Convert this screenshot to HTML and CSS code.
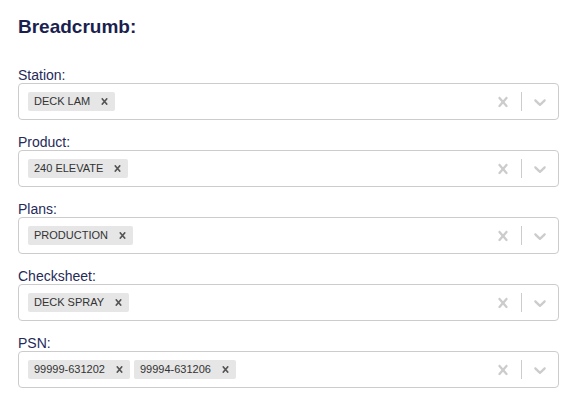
FILE: index.html
```html
<!DOCTYPE html>
<html>
<head lang="en">
    <meta charset="UTF-8">
    <title>Breadcrumb</title>
    <link rel="stylesheet" href="styles.css">
</head>
<body>
<div class="page">
    <h2 class="title">Breadcrumb:</h2>

    <div class="field">
        <label class="field-label">Station:</label>
        <div class="select">
            <div class="values">
                <div class="chip"><span class="chip-text">DECK LAM</span><span class="chip-remove"><svg viewBox="0 0 20 20" width="13" height="13"><path d="M14.348 14.849c-0.469 0.469-1.229 0.469-1.697 0l-2.651-3.030-2.651 3.029c-0.469 0.469-1.229 0.469-1.697 0-0.469-0.469-0.469-1.229 0-1.697l2.758-3.15-2.759-3.152c-0.469-0.469-0.469-1.228 0-1.697s1.228-0.469 1.697 0l2.652 3.031 2.651-3.031c0.469-0.469 1.228-0.469 1.697 0s0.469 1.229 0 1.697l-2.758 3.152 2.758 3.15c0.469 0.469 0.469 1.229 0 1.698z"/></svg></span></div>
            </div>
            <div class="indicators">
                <span class="ind"><svg viewBox="0 0 20 20" width="20" height="20"><path d="M14.348 14.849c-0.469 0.469-1.229 0.469-1.697 0l-2.651-3.030-2.651 3.029c-0.469 0.469-1.229 0.469-1.697 0-0.469-0.469-0.469-1.229 0-1.697l2.758-3.15-2.759-3.152c-0.469-0.469-0.469-1.228 0-1.697s1.228-0.469 1.697 0l2.652 3.031 2.651-3.031c0.469-0.469 1.228-0.469 1.697 0s0.469 1.229 0 1.697l-2.758 3.152 2.758 3.15c0.469 0.469 0.469 1.229 0 1.698z"/></svg></span>
                <span class="sep"></span>
                <span class="ind"><svg viewBox="0 0 20 20" width="20" height="20"><path d="M4.516 7.548c0.436-0.446 1.043-0.481 1.576 0l3.908 3.747 3.908-3.747c0.533-0.481 1.141-0.446 1.574 0 0.436 0.445 0.408 1.197 0 1.615-0.406 0.418-4.695 4.502-4.695 4.502-0.217 0.223-0.502 0.335-0.787 0.335s-0.57-0.112-0.789-0.335c0 0-4.287-4.084-4.695-4.502s-0.436-1.17 0-1.615z"/></svg></span>
            </div>
        </div>
    </div>

    <div class="field">
        <label class="field-label">Product:</label>
        <div class="select">
            <div class="values">
                <div class="chip"><span class="chip-text">240 ELEVATE</span><span class="chip-remove"><svg viewBox="0 0 20 20" width="13" height="13"><path d="M14.348 14.849c-0.469 0.469-1.229 0.469-1.697 0l-2.651-3.030-2.651 3.029c-0.469 0.469-1.229 0.469-1.697 0-0.469-0.469-0.469-1.229 0-1.697l2.758-3.15-2.759-3.152c-0.469-0.469-0.469-1.228 0-1.697s1.228-0.469 1.697 0l2.652 3.031 2.651-3.031c0.469-0.469 1.228-0.469 1.697 0s0.469 1.229 0 1.697l-2.758 3.152 2.758 3.15c0.469 0.469 0.469 1.229 0 1.698z"/></svg></span></div>
            </div>
            <div class="indicators">
                <span class="ind"><svg viewBox="0 0 20 20" width="20" height="20"><path d="M14.348 14.849c-0.469 0.469-1.229 0.469-1.697 0l-2.651-3.030-2.651 3.029c-0.469 0.469-1.229 0.469-1.697 0-0.469-0.469-0.469-1.229 0-1.697l2.758-3.15-2.759-3.152c-0.469-0.469-0.469-1.228 0-1.697s1.228-0.469 1.697 0l2.652 3.031 2.651-3.031c0.469-0.469 1.228-0.469 1.697 0s0.469 1.229 0 1.697l-2.758 3.152 2.758 3.15c0.469 0.469 0.469 1.229 0 1.698z"/></svg></span>
                <span class="sep"></span>
                <span class="ind"><svg viewBox="0 0 20 20" width="20" height="20"><path d="M4.516 7.548c0.436-0.446 1.043-0.481 1.576 0l3.908 3.747 3.908-3.747c0.533-0.481 1.141-0.446 1.574 0 0.436 0.445 0.408 1.197 0 1.615-0.406 0.418-4.695 4.502-4.695 4.502-0.217 0.223-0.502 0.335-0.787 0.335s-0.57-0.112-0.789-0.335c0 0-4.287-4.084-4.695-4.502s-0.436-1.17 0-1.615z"/></svg></span>
            </div>
        </div>
    </div>

    <div class="field">
        <label class="field-label">Plans:</label>
        <div class="select">
            <div class="values">
                <div class="chip"><span class="chip-text">PRODUCTION</span><span class="chip-remove"><svg viewBox="0 0 20 20" width="13" height="13"><path d="M14.348 14.849c-0.469 0.469-1.229 0.469-1.697 0l-2.651-3.030-2.651 3.029c-0.469 0.469-1.229 0.469-1.697 0-0.469-0.469-0.469-1.229 0-1.697l2.758-3.15-2.759-3.152c-0.469-0.469-0.469-1.228 0-1.697s1.228-0.469 1.697 0l2.652 3.031 2.651-3.031c0.469-0.469 1.228-0.469 1.697 0s0.469 1.229 0 1.697l-2.758 3.152 2.758 3.15c0.469 0.469 0.469 1.229 0 1.698z"/></svg></span></div>
            </div>
            <div class="indicators">
                <span class="ind"><svg viewBox="0 0 20 20" width="20" height="20"><path d="M14.348 14.849c-0.469 0.469-1.229 0.469-1.697 0l-2.651-3.030-2.651 3.029c-0.469 0.469-1.229 0.469-1.697 0-0.469-0.469-0.469-1.229 0-1.697l2.758-3.15-2.759-3.152c-0.469-0.469-0.469-1.228 0-1.697s1.228-0.469 1.697 0l2.652 3.031 2.651-3.031c0.469-0.469 1.228-0.469 1.697 0s0.469 1.229 0 1.697l-2.758 3.152 2.758 3.15c0.469 0.469 0.469 1.229 0 1.698z"/></svg></span>
                <span class="sep"></span>
                <span class="ind"><svg viewBox="0 0 20 20" width="20" height="20"><path d="M4.516 7.548c0.436-0.446 1.043-0.481 1.576 0l3.908 3.747 3.908-3.747c0.533-0.481 1.141-0.446 1.574 0 0.436 0.445 0.408 1.197 0 1.615-0.406 0.418-4.695 4.502-4.695 4.502-0.217 0.223-0.502 0.335-0.787 0.335s-0.57-0.112-0.789-0.335c0 0-4.287-4.084-4.695-4.502s-0.436-1.17 0-1.615z"/></svg></span>
            </div>
        </div>
    </div>

    <div class="field">
        <label class="field-label">Checksheet:</label>
        <div class="select">
            <div class="values">
                <div class="chip"><span class="chip-text">DECK SPRAY</span><span class="chip-remove"><svg viewBox="0 0 20 20" width="13" height="13"><path d="M14.348 14.849c-0.469 0.469-1.229 0.469-1.697 0l-2.651-3.030-2.651 3.029c-0.469 0.469-1.229 0.469-1.697 0-0.469-0.469-0.469-1.229 0-1.697l2.758-3.15-2.759-3.152c-0.469-0.469-0.469-1.228 0-1.697s1.228-0.469 1.697 0l2.652 3.031 2.651-3.031c0.469-0.469 1.228-0.469 1.697 0s0.469 1.229 0 1.697l-2.758 3.152 2.758 3.15c0.469 0.469 0.469 1.229 0 1.698z"/></svg></span></div>
            </div>
            <div class="indicators">
                <span class="ind"><svg viewBox="0 0 20 20" width="20" height="20"><path d="M14.348 14.849c-0.469 0.469-1.229 0.469-1.697 0l-2.651-3.030-2.651 3.029c-0.469 0.469-1.229 0.469-1.697 0-0.469-0.469-0.469-1.229 0-1.697l2.758-3.15-2.759-3.152c-0.469-0.469-0.469-1.228 0-1.697s1.228-0.469 1.697 0l2.652 3.031 2.651-3.031c0.469-0.469 1.228-0.469 1.697 0s0.469 1.229 0 1.697l-2.758 3.152 2.758 3.15c0.469 0.469 0.469 1.229 0 1.698z"/></svg></span>
                <span class="sep"></span>
                <span class="ind"><svg viewBox="0 0 20 20" width="20" height="20"><path d="M4.516 7.548c0.436-0.446 1.043-0.481 1.576 0l3.908 3.747 3.908-3.747c0.533-0.481 1.141-0.446 1.574 0 0.436 0.445 0.408 1.197 0 1.615-0.406 0.418-4.695 4.502-4.695 4.502-0.217 0.223-0.502 0.335-0.787 0.335s-0.57-0.112-0.789-0.335c0 0-4.287-4.084-4.695-4.502s-0.436-1.17 0-1.615z"/></svg></span>
            </div>
        </div>
    </div>

    <div class="field">
        <label class="field-label">PSN:</label>
        <div class="select">
            <div class="values">
                <div class="chip"><span class="chip-text">99999-631202</span><span class="chip-remove"><svg viewBox="0 0 20 20" width="13" height="13"><path d="M14.348 14.849c-0.469 0.469-1.229 0.469-1.697 0l-2.651-3.030-2.651 3.029c-0.469 0.469-1.229 0.469-1.697 0-0.469-0.469-0.469-1.229 0-1.697l2.758-3.15-2.759-3.152c-0.469-0.469-0.469-1.228 0-1.697s1.228-0.469 1.697 0l2.652 3.031 2.651-3.031c0.469-0.469 1.228-0.469 1.697 0s0.469 1.229 0 1.697l-2.758 3.152 2.758 3.15c0.469 0.469 0.469 1.229 0 1.698z"/></svg></span></div>
                <div class="chip"><span class="chip-text">99994-631206</span><span class="chip-remove"><svg viewBox="0 0 20 20" width="13" height="13"><path d="M14.348 14.849c-0.469 0.469-1.229 0.469-1.697 0l-2.651-3.030-2.651 3.029c-0.469 0.469-1.229 0.469-1.697 0-0.469-0.469-0.469-1.229 0-1.697l2.758-3.15-2.759-3.152c-0.469-0.469-0.469-1.228 0-1.697s1.228-0.469 1.697 0l2.652 3.031 2.651-3.031c0.469-0.469 1.228-0.469 1.697 0s0.469 1.229 0 1.697l-2.758 3.152 2.758 3.15c0.469 0.469 0.469 1.229 0 1.698z"/></svg></span></div>
            </div>
            <div class="indicators">
                <span class="ind"><svg viewBox="0 0 20 20" width="20" height="20"><path d="M14.348 14.849c-0.469 0.469-1.229 0.469-1.697 0l-2.651-3.030-2.651 3.029c-0.469 0.469-1.229 0.469-1.697 0-0.469-0.469-0.469-1.229 0-1.697l2.758-3.15-2.759-3.152c-0.469-0.469-0.469-1.228 0-1.697s1.228-0.469 1.697 0l2.652 3.031 2.651-3.031c0.469-0.469 1.228-0.469 1.697 0s0.469 1.229 0 1.697l-2.758 3.152 2.758 3.15c0.469 0.469 0.469 1.229 0 1.698z"/></svg></span>
                <span class="sep"></span>
                <span class="ind"><svg viewBox="0 0 20 20" width="20" height="20"><path d="M4.516 7.548c0.436-0.446 1.043-0.481 1.576 0l3.908 3.747 3.908-3.747c0.533-0.481 1.141-0.446 1.574 0 0.436 0.445 0.408 1.197 0 1.615-0.406 0.418-4.695 4.502-4.695 4.502-0.217 0.223-0.502 0.335-0.787 0.335s-0.57-0.112-0.789-0.335c0 0-4.287-4.084-4.695-4.502s-0.436-1.17 0-1.615z"/></svg></span>
            </div>
        </div>
    </div>
</div>
</body>
</html>
```

FILE: styles.css
```css
*{
    margin: 0;
    padding: 0;
    box-sizing: border-box;
}
body{
    background: #fff;
    font-family: "Liberation Sans", Arial, sans-serif;
}
.page{
    width: 581px;
    padding: 16px 22px 0 18px;
}
.title{
    font-size: 19px;
    line-height: 22px;
    font-weight: bold;
    color: #1b1f4f;
    margin-bottom: 29px;
}
.field{
    margin-bottom: 14px;
}
.field-label{
    display: block;
    font-size: 14px;
    line-height: 16px;
    color: #262a59;
}
.select{
    display: flex;
    height: 37px;
    border: 1px solid #cccccc;
    border-radius: 4px;
    background: #fff;
}
.values{
    flex: 1;
    display: flex;
    align-items: center;
    padding: 0 7px;
}
.chip{
    display: flex;
    align-items: center;
    margin: 2px;
    background: #e6e6e6;
    border-radius: 2px;
}
.chip-text{
    font-size: 11px;
    line-height: 13px;
    color: #333333;
    padding: 3px 3px 3px 6px;
}
.chip-remove{
    display: flex;
    align-items: center;
    padding: 0 4px 0 5px;
    fill: #555555;
}
.indicators{
    display: flex;
    align-items: center;
}
.ind{
    display: flex;
    padding: 8px;
    fill: #cccccc;
}
.sep{
    align-self: stretch;
    width: 1px;
    margin: 8px 0;
    background: #cccccc;
}
```
